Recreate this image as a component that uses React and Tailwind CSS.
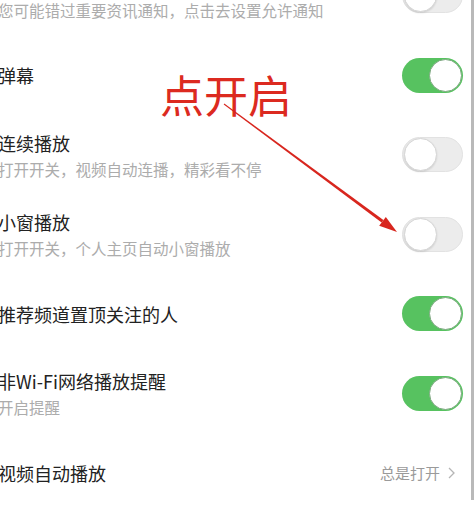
import React from "react";

const rows = [
  { title: "", sub: "您可能错过重要资讯通知，点击去设置允许通知", on: false },
  { title: "弹幕", on: true },
  { title: "连续播放", sub: "打开开关，视频自动连播，精彩看不停", on: false },
  { title: "小窗播放", sub: "打开开关，个人主页自动小窗播放", on: false },
  { title: "推荐频道置顶关注的人", on: true },
  { title: "非Wi-Fi网络播放提醒", sub: "开启提醒", on: true },
  { title: "视频自动播放", value: "总是打开" },
];

function Toggle({ on }) {
  return (
    <div
      className={`w-[61px] h-[35px] rounded-full flex items-center p-[1px] ${
        on ? "bg-[#57c260] justify-end" : "bg-[#ececec] border border-[#e2e2e2] justify-start"
      }`}
    >
      <div
        className={`w-[33px] h-[33px] rounded-full bg-white ${
          on ? "border border-[#7da880]" : "border border-[#d6d6d6] shadow-[0_1px_2px_rgba(0,0,0,0.12)]"
        }`}
      />
    </div>
  );
}

function Row({ row }) {
  return (
    <div className="h-[79.5px] flex items-center justify-between pr-[8px]">
      <div className="flex flex-col ml-[-2px]">
        <span className="text-[18px] leading-[24px] text-[#222]">{row.title || "\u00a0"}</span>
        {row.sub && (
          <span className="text-[15.5px] leading-[20px] mt-[4px] text-[#acacac]">{row.sub}</span>
        )}
      </div>
      {row.value ? (
        <div className="flex items-center gap-[8px] pr-[8px] text-[15px] text-[#9a9a9a]">
          <span>{row.value}</span>
          <svg width="7" height="12" viewBox="0 0 7 12">
            <path d="M1 1l5 5-5 5" fill="none" stroke="#b5b5b5" strokeWidth="1.3" />
          </svg>
        </div>
      ) : (
        <Toggle on={row.on} />
      )}
    </div>
  );
}

export default function App() {
  return (
    <div
      className="relative w-[474px] h-[500px] overflow-hidden bg-white border-r-[3px] border-[#b9b9b9]"
      style={{ fontFamily: '"Noto Sans CJK SC", "Noto Sans", sans-serif' }}
    >
      <div className="mt-[-44px]">
        {rows.map((r, i) => (
          <Row key={i} row={r} />
        ))}
      </div>

      {/* annotation */}
      <div className="absolute left-[160px] top-[72px] text-[44px] leading-none text-[#dc2a20]">
        点开启
      </div>
      <svg className="absolute left-0 top-0" width="471" height="500">
        <polygon
          points="223.7,104.4 224.3,103.6 383.4,220.1 381.6,222.5"
          fill="#d8261e"
        />
        <polygon points="397,232 379.2,225.7 385.8,216.9" fill="#d8261e" />
      </svg>
    </div>
  );
}
